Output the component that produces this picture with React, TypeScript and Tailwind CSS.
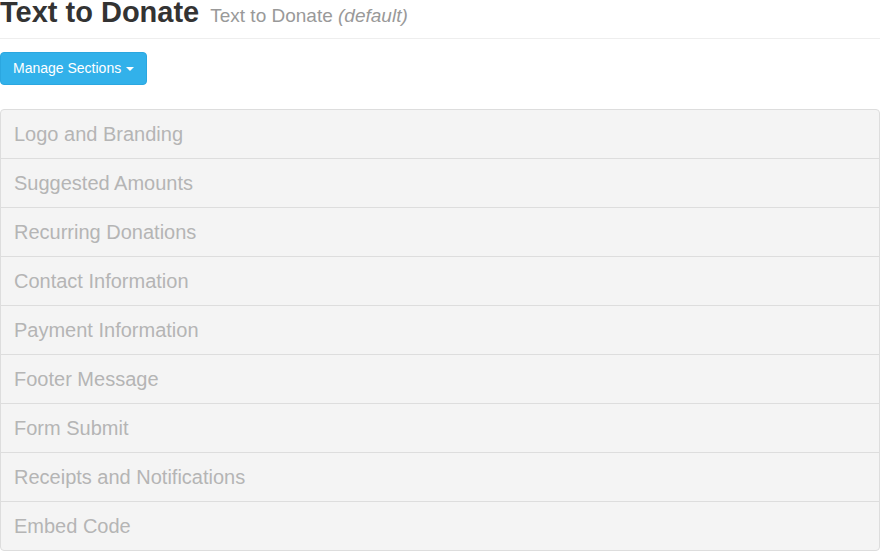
const sections = [
  "Logo and Branding",
  "Suggested Amounts",
  "Recurring Donations",
  "Contact Information",
  "Payment Information",
  "Footer Message",
  "Form Submit",
  "Receipts and Notifications",
  "Embed Code",
];

const App = () => {
  return (
    <div className="min-h-screen bg-white font-['Liberation_Sans',Arial,sans-serif]">
      <div className="flex items-baseline gap-[11px] border-b border-[#eeeeee] pb-[13px]">
        <h1 className="text-[29px] font-bold leading-[24px] text-[#333333]">Text to Donate</h1>
        <span className="text-[19px] leading-none text-[#999999]">
          Text to Donate <em>(default)</em>
        </span>
      </div>

      <div className="mt-[13px]">
        <button className="flex h-[33px] items-center gap-[5px] rounded-[4px] border border-[#2ba7e0] bg-[#32b1ea] pl-[12px] pr-[12px] text-[14px] text-white">
          Manage Sections
          <span className="h-0 w-0 border-x-[4px] border-t-[4px] border-x-transparent border-t-white" />
        </button>
      </div>

      <div className="mt-[24px] overflow-hidden rounded-[4px] border border-[#dddddd] bg-[#f4f4f4]">
        {sections.map((s, i) => (
          <div
            key={s}
            className={`box-content h-[48px] px-[13px] text-[20px] leading-[48px] text-[#b5b5b5] ${
              i > 0 ? "border-t border-[#dddddd]" : ""
            }`}
          >
            {s}
          </div>
        ))}
      </div>
    </div>
  );
};

export default App;
